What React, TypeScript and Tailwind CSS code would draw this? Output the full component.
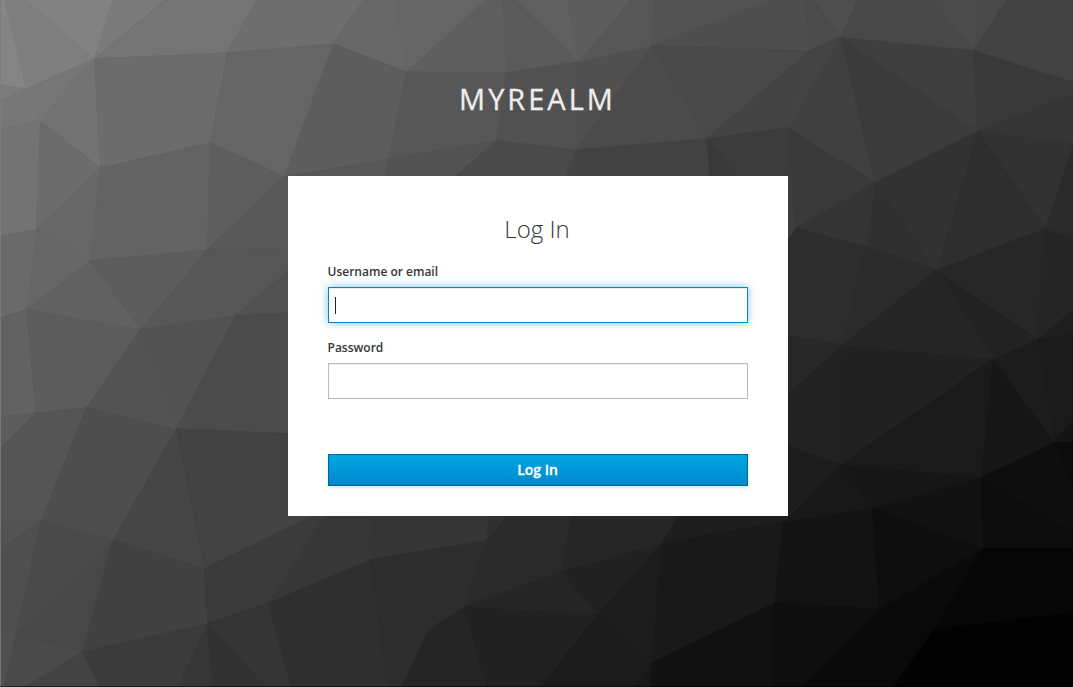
type Facet = [points: string, fill: string];

// Low-poly backdrop facets, lightest at the top left and darkest at the bottom right.
const facets: Facet[] = [
  ['0,-2 4,-2 26,88 0,84', '#858585'],
  ['4,-2 24,-2 94,58 26,88', '#7e7e7e'],
  ['24,-2 113,-2 94,58', '#828282'],
  ['113,-2 166,-2 94,58', '#7b7b7b'],
  ['166,-2 257,-2 227,52 94,58', '#747474'],
  ['257,-2 364,-2 333,43 227,52', '#6e6e6e'],
  ['0,84 26,88 0,101', '#7c7c7c'],
  ['0,101 26,88 40,120 0,128', '#777777'],
  ['26,88 94,58 40,120', '#767676'],
  ['94,58 40,120 100,167', '#737373'],
  ['94,58 227,52 210,142 100,167', '#6c6c6c'],
  ['227,52 333,43 284,176 210,142', '#656565'],
  ['0,128 40,120 36,229 0,235', '#737373'],
  ['40,120 100,167 36,229', '#6c6c6c'],
  ['100,167 36,229 90,260', '#676767'],
  ['100,167 210,142 207,249 90,260', '#636363'],
  ['210,142 284,176 207,249', '#5e5e5e'],
  ['284,176 207,249 290,247 290,174', '#595959'],
  ['36,229 90,260 26,309', '#666666'],
  ['0,235 36,229 26,309 0,317', '#6a6a6a'],
  ['90,260 26,309 140,329', '#616161'],
  ['90,260 207,249 140,329', '#5d5d5d'],
  ['207,249 140,329 235,315', '#575757'],
  ['207,249 290,247 290,268 235,315', '#565656'],
  ['235,315 290,268 290,312', '#515151'],
  ['0,317 26,309 36,412 0,416', '#626262'],
  ['26,309 140,329 86,407 36,412', '#5c5c5c'],
  ['140,329 176,428 86,407', '#535353'],
  ['140,329 235,315 176,428', '#525252'],
  ['235,315 290,312 290,433 176,428', '#4b4b4b'],
  ['0,416 36,412 0,448', '#5c5c5c'],
  ['0,448 36,412 86,407 41,520 0,520', '#555555'],
  ['0,520 41,520 0,548', '#535353'],
  ['86,407 176,428 113,539 41,520', '#4e4e4e'],
  ['176,428 204,568 113,539', '#464646'],
  ['176,428 290,433 310,516 204,568', '#424242'],
  ['0,548 41,520 15,636 0,632', '#4f4f4f'],
  ['41,520 113,539 15,636', '#4a4a4a'],
  ['113,539 15,636 82,651', '#474747'],
  ['113,539 204,568 207,623 82,651', '#414141'],
  ['0,632 15,636 4,687 0,687', '#505050'],
  ['15,636 82,651 23,687 4,687', '#4a4a4a'],
  ['82,651 100,687 23,687', '#434343'],
  ['82,651 207,623 178,687 100,687', '#3b3b3b'],
  ['204,568 310,516 325,514 268,602 207,623', '#3b3b3b'],
  ['268,602 325,514 372,514 370,559', '#373737'],
  ['207,623 178,687 213,687', '#363636'],
  ['207,623 213,687 267,687', '#313131'],
  ['207,623 268,602 291,687 267,687', '#353535'],
  ['268,602 370,559 388,687 291,687', '#2f2f2f'],
  ['370,559 372,514 489,514 486,540', '#353535'],
  ['486,540 489,514 508,514', '#303030'],
  ['370,559 486,540 464,606 429,628 401,687 388,687', '#2d2d2d'],
  ['429,628 464,606 487,687 401,687', '#252525'],
  ['464,606 598,613 540,687 487,687', '#212121'],
  ['486,540 508,514 571,514 561,571 464,606', '#2a2a2a'],
  ['464,606 561,571 598,613', '#252525'],
  ['561,571 571,514 679,514 661,543', '#262626'],
  ['561,571 661,543 598,613', '#212121'],
  ['598,613 661,543 652,662', '#1c1c1c'],
  ['598,613 652,662 634,687 540,687', '#1b1b1b'],
  ['652,662 651,687 634,687', '#181818'],
  ['661,543 679,514 788,514 783,521', '#1d1d1d'],
  ['661,543 783,521 774,602 652,662', '#191919'],
  ['652,662 774,602 772,687 651,687', '#111111'],
  ['783,521 872,507 879,608 774,602', '#131313'],
  ['774,602 879,608 797,687 772,687', '#0e0e0e'],
  ['879,608 865,687 797,687', '#0a0a0a'],
  ['879,608 933,629 893,687 865,687', '#090909'],
  ['872,507 983,547 879,608', '#0e0e0e'],
  ['872,507 981,476 983,547', '#121212'],
  ['983,547 879,608 933,629', '#0a0a0a'],
  ['983,547 1073,547 1073,612 933,629', '#060606'],
  ['933,629 1073,612 1073,687 893,687', '#020202'],
  ['840,464 872,507 783,521', '#181818'],
  ['840,464 981,476 872,507', '#161616'],
  ['981,476 1054,441 1073,486 1073,533', '#0e0e0e'],
  ['981,476 1073,533 1073,547 983,547', '#0c0c0c'],
  ['1054,441 1073,441 1073,486', '#0b0b0b'],
  ['842,344 993,358 840,464', '#212121'],
  ['993,358 840,464 981,476', '#1a1a1a'],
  ['993,358 981,476 1054,441', '#161616'],
  ['993,358 1037,338 1054,441', '#1c1c1c'],
  ['1037,338 1073,333 1073,420 1054,441', '#1a1a1a'],
  ['1054,441 1073,420 1073,441', '#131313'],
  ['1037,338 1073,309 1073,333', '#1e1e1e'],
  ['936,269 1037,338 993,358', '#222222'],
  ['936,269 1045,227 1037,338', '#272727'],
  ['1045,227 1073,238 1073,309 1037,338', '#252525'],
  ['1045,227 1073,142 1073,238', '#2a2a2a'],
  ['977,130 1045,227 1073,142', '#323232'],
  ['977,130 1073,92 1073,142', '#353535'],
  ['977,130 1045,227 936,269', '#2e2e2e'],
  ['977,130 936,269 875,181', '#323232'],
  ['875,181 866,246 936,269', '#303030'],
  ['795,227 875,181 866,246', '#343434'],
  ['795,227 866,246 842,344 786,334 786,240', '#2d2d2d'],
  ['866,246 936,269 842,344', '#2b2b2b'],
  ['842,344 936,269 993,358', '#252525'],
  ['786,334 842,344 786,395', '#282828'],
  ['786,395 842,344 840,464 786,444', '#222222'],
  ['786,444 840,464 786,517', '#1c1c1c'],
  ['788,127 786,240 795,227', '#3c3c3c'],
  ['788,127 875,181 795,227', '#393939'],
  ['788,127 840,36 875,181', '#404040'],
  ['840,36 875,181 977,130', '#3b3b3b'],
  ['840,36 973,49 977,130', '#3f3f3f'],
  ['973,49 977,130 1073,92 1073,81', '#393939'],
  ['973,49 1006,-2 1073,-2 1073,81', '#424242'],
  ['973,49 983,-2 1006,-2', '#4a4a4a'],
  ['973,49 931,-2 983,-2', '#4b4b4b'],
  ['840,36 857,-2 931,-2 973,49', '#484848'],
  ['840,36 812,-2 857,-2', '#4f4f4f'],
  ['809,50 840,36 812,-2 804,-2', '#4b4b4b'],
  ['651,45 771,-2 804,-2 809,50', '#4e4e4e'],
  ['651,45 809,50 706,138', '#494949'],
  ['809,50 706,138 788,127', '#434343'],
  ['809,50 788,127 840,36', '#444444'],
  ['706,138 788,127 788,178 741,178', '#3c3c3c'],
  ['706,138 709,178 741,178', '#393939'],
  ['651,45 575,149 706,138', '#4b4b4b'],
  ['575,149 706,138 709,178 575,178', '#424242'],
  ['578,61 651,45 575,149', '#505050'],
  ['578,61 631,-2 655,-2 651,45', '#565656'],
  ['651,45 655,-2 771,-2', '#535353'],
  ['578,61 566,-2 631,-2', '#5d5d5d'],
  ['578,61 514,-2 566,-2', '#606060'],
  ['506,72 502,-2 514,-2 578,61', '#5a5a5a'],
  ['406,71 486,-2 502,-2 506,72', '#5e5e5e'],
  ['406,71 394,-2 486,-2', '#656565'],
  ['333,43 364,-2 394,-2 406,71', '#676767'],
  ['333,43 406,71 388,158 284,176', '#5d5d5d'],
  ['406,71 506,72 496,140 388,158', '#575757'],
  ['506,72 578,61 575,149 496,140', '#515151'],
  ['284,176 388,158 386,178', '#575757'],
  ['388,158 496,140 452,178 386,178', '#525252'],
  ['496,140 575,149 565,178 452,178', '#4a4a4a'],
  ['575,149 565,178 575,178', '#454545'],
];

function Backdrop() {
  return (
    <svg
      className="absolute inset-0 h-full w-full"
      viewBox="0 0 1073 687"
      preserveAspectRatio="xMidYMid slice"
      aria-hidden="true"
    >
      <rect width="1073" height="687" fill="#3a3a3a" />
      <g transform="translate(0.4 0.8)">
        {facets.map(([points, fill]) => (
          <polygon key={points} points={points} fill={fill} stroke={fill} strokeWidth="0.7" strokeLinejoin="round" />
        ))}
      </g>
      <rect width="1" height="687" fill="#808080" fillOpacity="0.8" />
      <rect y="686" width="1073" height="1" fill="#000000" fillOpacity="0.55" />
    </svg>
  );
}

export default function App() {
  return (
    <div className="relative h-[687px] w-[1073px] overflow-hidden bg-[#3a3a3a] font-['Open_Sans',sans-serif]">
      <Backdrop />
      <div className="relative flex flex-col pl-72">
        <header className="flex h-44 w-[499px] justify-center pt-[79px]">
          <h1 className="h-10 text-[29px] leading-10 tracking-[3px] text-[#eeeeee] uppercase [-webkit-text-stroke:0.3px_#eeeeee]">
            myrealm
          </h1>
        </header>
        <main className="flex h-[340px] w-[500px] flex-col bg-white px-10 pt-9 text-[#363636]">
          <h2 className="h-[34px] pr-0.5 text-center text-2xl leading-[34px] font-light">Log In</h2>
          <form className="flex flex-col">
            <label className="mt-4 -ml-px h-5 pl-[0.5px] text-xs leading-5 font-semibold">Username or email</label>
            <div className="mt-[5px] flex h-9 items-center border border-[#0088ce] bg-white px-1.5 shadow-[inset_0_1px_1px_rgba(3,3,3,0.075),0_0_8px_rgba(0,136,206,0.5)]">
              <span className="h-[17px] w-px bg-[#222222]" />
            </div>
            <label className="mt-[15px] -ml-px h-5 pl-[0.5px] text-xs leading-5 font-semibold">Password</label>
            <div className="mt-[5px] h-9 border border-[#bbbbbb] bg-white shadow-[inset_0_1px_1px_rgba(3,3,3,0.075)]" />
            <button
              type="button"
              className="mt-[55px] h-8 border border-[#00659c] bg-linear-to-b from-[#00a8e1] to-[#0088ce] pr-px text-sm leading-[30px] font-semibold text-white shadow-[0_2px_3px_rgba(3,3,3,0.1)] [-webkit-text-stroke:0.3px_#ffffff]"
            >
              Log In
            </button>
          </form>
        </main>
      </div>
    </div>
  );
}
